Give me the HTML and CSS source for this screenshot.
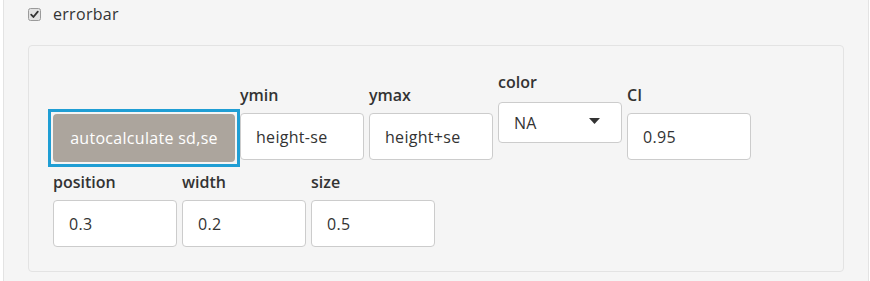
FILE: index.html
```html
<!DOCTYPE html>
<html>
<head>
<meta charset="utf-8">
<link rel="stylesheet" href="styles.css">
</head>
<body>
<div class="well">
  <label class="check">
    <span class="cb"><svg width="13" height="13" viewBox="0 0 13 13"><rect x="0.5" y="0.5" width="12" height="12" rx="2" fill="#e2e2e2" stroke="#9a9a9a"/><path d="M3.2 6.6 L5.4 9 L9.8 3.6" fill="none" stroke="#333" stroke-width="1.8" stroke-linecap="round" stroke-linejoin="round"/></svg></span>
    <span class="check-text">errorbar</span>
  </label>
  <div class="panel">
    <div class="row row1">
      <div class="focus-ring"><button class="btn">autocalculate sd,se</button></div>
      <div class="field low"><label class="lbl">ymin</label><input class="inp" value="height-se"></div>
      <div class="field low"><label class="lbl">ymax</label><input class="inp" value="height+se"></div>
      <div class="field sel"><label class="lbl">color</label><div class="select"><span>NA</span><svg class="caret" width="11" height="6" viewBox="0 0 11 6"><path d="M0 0 H11 L5.5 6 Z" fill="#333"/></svg></div></div>
      <div class="field low"><label class="lbl">CI</label><input class="inp" value="0.95"></div>
    </div>
    <div class="row row2">
      <div class="field"><label class="lbl">position</label><input class="inp" value="0.3"></div>
      <div class="field"><label class="lbl">width</label><input class="inp" value="0.2"></div>
      <div class="field"><label class="lbl">size</label><input class="inp" value="0.5"></div>
    </div>
  </div>
</div>
</body>
</html>
```
FILE: styles.css
```css
* { box-sizing: border-box; }
body {
  margin: 0;
  background: #fff;
  font-family: "Open Sans", "Noto Sans", sans-serif;
  color: #333;
}
.well {
  margin-left: 3px;
  width: 866px;
  background: #f5f5f5;
  border: 1px solid #e3e3e3;
  border-top: none;
  padding: 3px 0 30px 24px;
}
.check {
  display: flex;
  align-items: center;
  gap: 12px;
  height: 22px;
  font-size: 16px;
  letter-spacing: 0.3px;
  line-height: 22px;
}
.cb { display: flex; width: 13px; height: 13px; }
.panel {
  margin-top: 20px;
  width: 816px;
  background: #f5f5f5;
  border: 1px solid #e3e3e3;
  border-radius: 4px;
  padding: 26px 24px 24px 24px;
}
.row {
  display: flex;
  align-items: flex-start;
  gap: 5px;
}
.row1 { gap: 0; margin-left: -5px; }
.row1 .field + .field { margin-left: 5px; }
.row2 { margin-top: 5px; }
.focus-ring {
  margin-top: 37px;
  border: 3px solid #1f9ed4;
  padding: 2px;
  display: flex;
}
.btn {
  width: 182px;
  height: 48px;
  border: none;
  border-radius: 4px;
  background: #aca59d;
  color: #fff;
  font-family: inherit;
  font-size: 16px;
  letter-spacing: 0.3px;
  padding: 0;
}
.field {
  display: flex;
  flex-direction: column;
  width: 124px;
}
.field.low { margin-top: 13px; }
.lbl {
  font-size: 16px;
  font-weight: 600;
  line-height: 20px;
  margin-bottom: 8px;
  color: #333;
}
.sel .lbl { margin-bottom: 10px; }
.inp {
  width: 124px;
  height: 47px;
  border: 1px solid #ccc;
  border-radius: 4px;
  background: #fff;
  padding: 0 0 0 15px;
  font-family: inherit;
  font-size: 16px;
  letter-spacing: 0.3px;
  color: #333;
}
.select {
  width: 124px;
  height: 41px;
  border: 1px solid #ccc;
  border-radius: 4px;
  background: #fff;
  display: flex;
  align-items: center;
  justify-content: space-between;
  padding: 0 21px 0 15px;
  font-size: 16px;
  letter-spacing: 0.3px;
  color: #333;
}
.caret { display: block; margin-top: -3px; }
```
